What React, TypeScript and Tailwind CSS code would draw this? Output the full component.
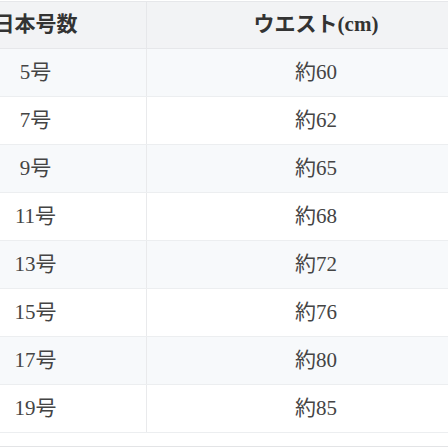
const rows = [
  { size: '5号', waist: '約60' },
  { size: '7号', waist: '約62' },
  { size: '9号', waist: '約65' },
  { size: '11号', waist: '約68' },
  { size: '13号', waist: '約72' },
  { size: '15号', waist: '約76' },
  { size: '17号', waist: '約80' },
  { size: '19号', waist: '約85' },
];

const App = () => {
  return (
    <div className="w-[448px] h-[448px] overflow-hidden bg-white font-['Liberation_Serif','Noto_Sans_CJK_JP',serif]">
      <div className="w-[560px] ml-[-75px] mt-px border-t border-[#e6e7ea]">
        <div className="grid grid-cols-[222px_338px] h-[47px] bg-[#f2f3f5] border-b border-[#e6e7ea] text-[21px] font-bold text-[#333]">
          <div className="flex items-center justify-center border-r border-[#e6e7ea]">日本号数</div>
          <div className="flex items-center justify-center">ウエスト(cm)</div>
        </div>
        {rows.map((row, index) => (
          <div
            key={row.size}
            className={`grid grid-cols-[222px_338px] h-12 border-b border-[#eceef0] text-[21px] text-[#444] ${
              index % 2 === 0 ? 'bg-[#f7f9fb]' : 'bg-white'
            }`}
          >
            <div className="flex items-center justify-center border-r border-[#e9eaec]">{row.size}</div>
            <div className="flex items-center justify-center">{row.waist}</div>
          </div>
        ))}
        <div className="h-[14px] border-b border-[#e3e4e6]"></div>
      </div>
    </div>
  );
};

export default App;
